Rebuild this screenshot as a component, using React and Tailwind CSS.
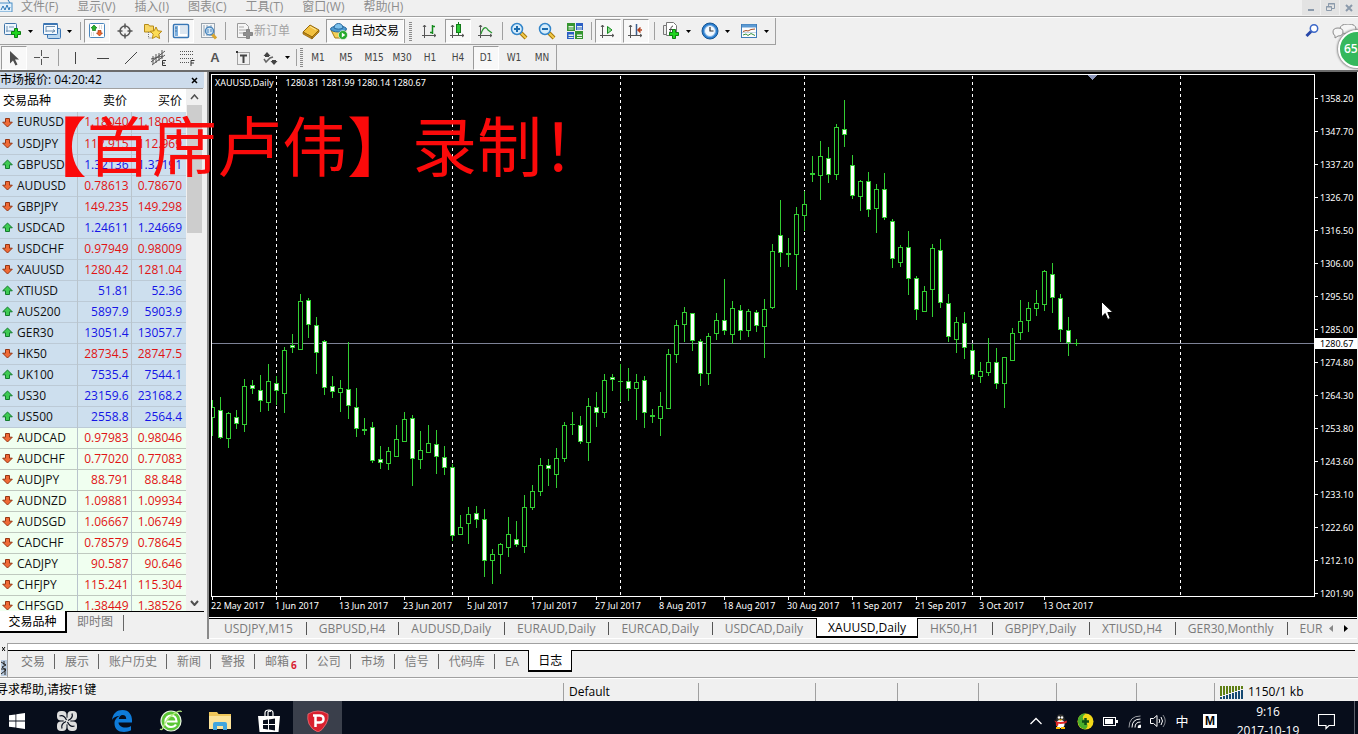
import React from 'react';

const MENUS = ['文件(F)', '显示(V)', '插入(I)', '图表(C)', '工具(T)', '窗口(W)', '帮助(H)'];

const QUOTES = [
  ['EURUSD', '1.18040', '1.18095', 'd'],
  ['USDJPY', '112.915', '112.969', 'd'],
  ['GBPUSD', '1.32136', '1.32191', 'u'],
  ['AUDUSD', '0.78613', '0.78670', 'd'],
  ['GBPJPY', '149.235', '149.298', 'd'],
  ['USDCAD', '1.24611', '1.24669', 'u'],
  ['USDCHF', '0.97949', '0.98009', 'd'],
  ['XAUUSD', '1280.42', '1281.04', 'd'],
  ['XTIUSD', '51.81', '52.36', 'u'],
  ['AUS200', '5897.9', '5903.9', 'u'],
  ['GER30', '13051.4', '13057.7', 'u'],
  ['HK50', '28734.5', '28747.5', 'd'],
  ['UK100', '7535.4', '7544.1', 'u'],
  ['US30', '23159.6', '23168.2', 'u'],
  ['US500', '2558.8', '2564.4', 'u'],
  ['AUDCAD', '0.97983', '0.98046', 'd'],
  ['AUDCHF', '0.77020', '0.77083', 'd'],
  ['AUDJPY', '88.791', '88.848', 'd'],
  ['AUDNZD', '1.09881', '1.09934', 'd'],
  ['AUDSGD', '1.06667', '1.06749', 'd'],
  ['CADCHF', '0.78579', '0.78645', 'd'],
  ['CADJPY', '90.587', '90.646', 'd'],
  ['CHFJPY', '115.241', '115.304', 'd'],
  ['CHFSGD', '1.38449', '1.38526', 'd'],
];

// One candle every 8 units from the left edge: [high, low, body top, body bottom, filled]
const CANDLES = [
  [400, 436, 407, 418, 0], [397, 439, 410, 438, 1], [412, 448, 413, 439, 0], [410, 429, 417, 424, 1],
  [379, 432, 386, 425, 0], [380, 394, 385, 389, 1], [375, 412, 390, 401, 1], [364, 411, 381, 403, 0],
  [376, 405, 383, 391, 1], [347, 413, 350, 394, 0], [334, 353, 345, 348, 1], [294, 350, 301, 350, 0],
  [298, 338, 300, 325, 1], [317, 374, 325, 353, 1], [340, 395, 341, 388, 1], [376, 398, 386, 392, 1],
  [380, 412, 388, 393, 0], [342, 419, 389, 406, 1], [388, 437, 407, 429, 1], [418, 435, 429, 431, 1],
  [422, 463, 427, 461, 1], [446, 469, 459, 463, 1], [447, 470, 451, 464, 0], [425, 457, 439, 457, 0],
  [412, 442, 419, 442, 0], [415, 486, 418, 459, 1], [431, 469, 450, 460, 0], [425, 453, 443, 453, 0],
  [430, 474, 444, 457, 1], [446, 475, 457, 468, 1], [464, 541, 467, 536, 1], [515, 535, 527, 535, 0],
  [507, 544, 514, 524, 0], [506, 528, 513, 520, 1], [509, 577, 519, 561, 1], [549, 584, 554, 561, 0],
  [543, 574, 544, 555, 0], [517, 557, 534, 548, 0], [521, 547, 539, 545, 1], [495, 553, 507, 547, 0],
  [485, 510, 491, 508, 0], [458, 496, 465, 492, 0], [459, 486, 465, 469, 1], [448, 488, 458, 475, 0],
  [422, 462, 425, 459, 0], [412, 435, 424, 425, 1], [416, 444, 425, 442, 1], [398, 461, 406, 443, 0],
  [392, 427, 407, 413, 1], [374, 418, 380, 413, 0], [374, 391, 377, 380, 1], [364, 402, 381, 382, 1],
  [368, 401, 381, 389, 1], [374, 420, 382, 389, 0], [376, 428, 380, 413, 1], [409, 423, 415, 417, 1],
  [392, 436, 406, 419, 0], [349, 409, 354, 409, 0], [320, 363, 325, 355, 0], [307, 342, 312, 325, 0],
  [313, 351, 313, 341, 1], [339, 386, 341, 374, 1], [333, 385, 336, 374, 0], [313, 340, 320, 334, 0],
  [279, 335, 320, 331, 1], [301, 344, 308, 335, 0], [305, 340, 310, 331, 1], [309, 337, 311, 331, 0],
  [310, 332, 312, 326, 1], [299, 358, 309, 327, 0], [244, 309, 251, 308, 0], [200, 267, 235, 253, 1],
  [238, 267, 253, 255, 1], [207, 290, 214, 255, 0], [191, 231, 204, 216, 0], [156, 182, 173, 175, 1],
  [141, 200, 156, 176, 0], [147, 183, 158, 175, 1], [124, 180, 127, 175, 0], [100, 147, 129, 135, 1],
  [155, 199, 165, 196, 1], [180, 211, 181, 197, 0], [172, 217, 181, 210, 1], [184, 233, 189, 209, 0],
  [173, 220, 189, 218, 1], [219, 268, 221, 259, 1], [245, 267, 247, 263, 0], [231, 295, 247, 279, 1],
  [276, 320, 278, 310, 1], [286, 312, 291, 312, 0], [244, 317, 248, 290, 0], [239, 308, 250, 303, 1],
  [294, 342, 303, 337, 1], [317, 353, 322, 340, 0], [312, 359, 323, 348, 1], [344, 379, 350, 375, 1],
  [362, 383, 371, 377, 0], [338, 376, 362, 373, 0], [348, 389, 362, 384, 1], [357, 408, 357, 384, 0],
  [328, 361, 333, 361, 0], [300, 340, 321, 333, 0], [302, 332, 308, 321, 0], [290, 316, 303, 309, 0],
  [270, 311, 271, 305, 0], [263, 313, 274, 298, 1], [294, 342, 298, 330, 1], [317, 356, 330, 343, 1],
  [339, 346, 343, 344, 1],
];

const PRICES = ['1358.20', '1347.70', '1337.20', '1326.70', '1316.50', '1306.00', '1295.50', '1285.00', '1274.80', '1264.30', '1253.80', '1243.60', '1233.10', '1222.60', '1212.10', '1201.90'];
const DATES = ['22 May 2017', '1 Jun 2017', '13 Jun 2017', '23 Jun 2017', '5 Jul 2017', '17 Jul 2017', '27 Jul 2017', '8 Aug 2017', '18 Aug 2017', '30 Aug 2017', '11 Sep 2017', '21 Sep 2017', '3 Oct 2017', '13 Oct 2017'];
const CHART_TABS = ['USDJPY,M15', 'GBPUSD,H4', 'AUDUSD,Daily', 'EURAUD,Daily', 'EURCAD,Daily', 'USDCAD,Daily', 'XAUUSD,Daily', 'HK50,H1', 'GBPJPY,Daily', 'XTIUSD,H4', 'GER30,Monthly', 'EUR'];
const TERMINAL_TABS = ['交易', '展示', '账户历史', '新闻', '警报', '邮箱', '公司', '市场', '信号', '代码库', 'EA', '日志'];
const FRAMES = ['M1', 'M5', 'M15', 'M30', 'H1', 'H4', 'D1', 'W1', 'MN'];

function Ico({ children, size = 18 }) {
  return (
    <svg width={size} height={size} viewBox={`0 0 ${size} ${size}`} fill="none" className="shrink-0" aria-hidden="true">
      {children}
    </svg>
  );
}

function Tool({ label, pressed, children }) {
  return (
    <button type="button" aria-label={label} aria-pressed={!!pressed} className="flex w-7 shrink-0 items-center justify-center">
      <span
        className={
          pressed
            ? 'flex h-6 w-[26px] items-center justify-center border border-t-[#9a9a9a] border-l-[#9a9a9a] border-r-white border-b-white bg-[#f8f8f8]'
            : 'flex h-6 w-[26px] items-center justify-center'
        }
      >
        {children}
      </span>
    </button>
  );
}

function Drop({ label, children }) {
  return (
    <button type="button" aria-label={label} className="flex w-[39px] shrink-0 items-center gap-[6px] pl-1">
      {children}
      <svg width="5" height="3" viewBox="0 0 5 3" aria-hidden="true"><path d="M0 0h5L2.500 3z" fill="#000" /></svg>
    </button>
  );
}

function Sep({ wide }) {
  return (
    <div className={wide ? 'flex w-2 shrink-0 justify-center' : 'flex w-[5px] shrink-0 justify-center'}>
      <div className="my-1 w-px bg-[#a0a0a0]" />
    </div>
  );
}

function Grip({ tight }) {
  return (
    <div className={tight ? 'mx-px flex w-[3px] shrink-0 flex-col justify-center gap-px' : 'mx-1 flex w-[3px] shrink-0 flex-col justify-center gap-px'}>
      {Array.from({ length: 10 }, (_, i) => <div key={i} className="h-px bg-[#8c8c8c]" />)}
    </div>
  );
}

const Axes = () => <path d="M3.500 3v13M1 13.500h14M2 5l1.500-2L5 5M13 12l2 1.500-2 1.500" stroke="#555" />;
const Plus = ({ x, y, c = '#1fd51f', s = '#0c7f12' }) => (
  <path transform={`translate(${x} ${y})`} d="M3.500 .5h3v3h3v3h-3v3h-3v-3h-3v-3h3z" fill={c} stroke={s} />
);

function Magnifier({ plus }) {
  return (
    <Ico>
      <path d="M11 11l5 5" stroke="#a77708" strokeWidth="4" />
      <path d="M11 11l5 5" stroke="#f3cb4c" strokeWidth="2" />
      <circle cx="7" cy="7" r="5.500" fill="#d7edfb" stroke="#3385c9" strokeWidth="1.500" />
      <path d={plus ? 'M4 7h6M7 4v6' : 'M4 7h6'} stroke="#1c6cae" strokeWidth="2" />
    </Ico>
  );
}

function MainToolbar() {
  return (
    <div className="flex h-[27px] shrink-0 items-stretch self-start border-b border-[#a0a0a0] border-r">
      <Drop label="新图表">
        <Ico>
          <rect x=".5" y="1.500" width="12" height="11" rx="1" fill="#eef6fd" stroke="#3f74a8" />
          <path d="M3 10V4M2 9h8M5 5h5" stroke="#6d92b5" />
          <Plus x="7" y="6" />
        </Ico>
      </Drop>
      <Drop label="配置文件">
        <Ico>
          <rect x="4.500" y="6.500" width="13" height="10" rx="1" fill="#bcd8ef" stroke="#3b75b3" />
          <rect x=".5" y="1.500" width="14" height="11" rx="1" fill="#f4f9fe" stroke="#3b75b3" />
          <path d="M.5 2h14" stroke="#3b75b3" strokeWidth="2" />
          <path d="M3 10V4.500h9M3 9h9l-2-1.500M9 10.500L12 9" stroke="#6d8fb0" />
        </Ico>
      </Drop>
      <Sep />
      <Tool label="市场报价" pressed>
        <Ico>
          <rect x="1.500" y="1.500" width="15" height="14" rx="1" fill="#fff" stroke="#4a86bd" />
          <path d="M6 3l3 3H7.500v2.500h-3V6H3z" fill="#26b22c" stroke="#147a1a" strokeWidth=".7" />
          <path d="M11.500 14l-3-3H10V8.500h3V11h1.500z" fill="#f1672c" stroke="#a83a10" strokeWidth=".7" />
          <path d="M11 4h4M11 6h3M3 11h4M3 13h4" stroke="#bbb" strokeDasharray="1 1" />
        </Ico>
      </Tool>
      <Tool label="数据窗口">
        <Ico>
          <circle cx="9" cy="9" r="5" stroke="#555" strokeWidth="1.500" />
          <path d="M9 1.500v5M9 11.500v5M1.500 9h5M11.500 9h5" stroke="#555" strokeWidth="1.500" />
        </Ico>
      </Tool>
      <Tool label="导航">
        <Ico>
          <path d="M.5 2.500h4l1 1.500h4v6h-9z" fill="#f8d764" stroke="#b58a17" />
          <path d="M4.500 10v6h4" stroke="#777" strokeDasharray="1 1" />
          <path d="M12 5l1.800 3.800 4 .5-3 2.900.8 4.300L12 14.500 8.400 16.500l.8-4.300-3-2.900 4-.5z" fill="#fcdc55" stroke="#b98a13" />
        </Ico>
      </Tool>
      <Tool label="终端" pressed>
        <Ico>
          <rect x="1.500" y="2.500" width="15" height="13" rx="1" fill="#fff" stroke="#3776b5" strokeWidth="1.500" />
          <path d="M3 4h3v10H3z" fill="#7db0df" />
          <path d="M8 5h7M8 7h7M8 9h7M8 11h7" stroke="#b9cde1" />
          <path d="M3.500 6h1M3.500 9h1" stroke="#0d4078" />
        </Ico>
      </Tool>
      <Tool label="策略测试">
        <Ico>
          <rect x="1.500" y="1.500" width="13" height="14" fill="#f4f6f8" stroke="#9aa4ae" />
          <path d="M4 3v11M7 3v11M11 3v11" stroke="#8fa0b0" />
          <path d="M12 12l4 4.500" stroke="#d9a62e" strokeWidth="3" />
          <circle cx="9.500" cy="9" r="4" fill="#cfe6f8" fillOpacity=".85" stroke="#4a86bd" strokeWidth="1.500" />
          <path d="M8 7v4M11 7v3" stroke="#4a86bd" />
        </Ico>
      </Tool>
      <Sep />
      <button type="button" className="ml-2 flex shrink-0 items-center text-[#a3a3a3]">
        <Ico>
          <path d="M1.500 1.500h8l3 3v11h-11z" fill="#f6f6f6" stroke="#9a9a9a" />
          <path d="M3 5h5M3 8h7M3 11h4" stroke="#aaa" />
          <Plus x="7" y="7" c="#8f8f8f" s="#858585" />
        </Ico>
        <span className="text-xs">新订单</span>
      </button>
      <div className="w-[7px] shrink-0" />
      <Tool label="编辑器">
        <Ico>
          <path d="M1 10L8 3l9 5-7 7z" fill="#f2c140" stroke="#95690c" />
          <path d="M1 10v2l9 5v-2zM10 15v2l7-7V8z" fill="#c48b16" stroke="#8b600b" strokeWidth=".7" />
          <path d="M8 4.500L14 8" stroke="#fde79b" />
        </Ico>
      </Tool>
      <button type="button" className="my-px ml-px flex shrink-0 items-center gap-[3px] border border-t-[#9a9a9a] border-l-[#9a9a9a] border-r-white border-b-white bg-[#f8f8f8] pr-1 pl-[3px] text-black">
        <Ico>
          <path d="M1 8l4 8h7l4-8z" fill="#f4cf57" stroke="#a67c15" />
          <ellipse cx="8.500" cy="7" rx="8" ry="3" fill="#4c9bd2" stroke="#26679c" />
          <path d="M4 6c0-6 9-6 9 0-2 1.500-7 1.500-9 0z" fill="#7cc1ec" stroke="#26679c" />
          <circle cx="13" cy="13" r="4.500" fill="#24a92b" stroke="#fff" strokeWidth=".6" />
          <path d="M11.800 10.500v5l3.500-2.500z" fill="#fff" />
        </Ico>
        <span className="text-xs">自动交易</span>
      </button>
      <div className="my-px w-px bg-[#a0a0a0]" />
      <Grip />
      <Tool label="柱状图">
        <Ico><Axes /><path d="M11.500 3v9M11 4.500h3M9 10.500h2" stroke="#138a1c" strokeWidth="1.500" /></Ico>
      </Tool>
      <Tool label="蜡烛图" pressed>
        <Ico><Axes /><path d="M9.500 0v13" stroke="#137a1a" /><rect x="7.500" y="2.500" width="4" height="8" fill="#2bc934" stroke="#137a1a" /></Ico>
      </Tool>
      <Tool label="折线图">
        <Ico><Axes /><path d="M4 12c2-7 5-8 7-4l4 3" stroke="#2c9733" strokeWidth="1.200" /></Ico>
      </Tool>
      <Sep />
      <Tool label="放大"><Magnifier plus /></Tool>
      <Tool label="缩小"><Magnifier /></Tool>
      <Tool label="平铺窗口">
        <Ico>
          <path d="M1 1h8v8H1zM9 9h8v8H9z" fill="#35952f" />
          <path d="M10 1h7v7h-7zM1 10h7v7H1z" fill="#2c5fc4" />
          <path d="M2.500 4h5v1.500h-5zM2.500 6.500h5v1h-5zM11 4h5v1.500h-5zM11 6.500h5v1h-5zM2.500 12.500h5V14h-5zM2.500 15h5v1h-5zM11 12.500h5V14h-5zM11 15h5v1h-5z" fill="#e4f1e6" />
        </Ico>
      </Tool>
      <Sep />
      <Tool label="自动滚动" pressed><Ico><Axes /><path d="M8.500 4.500v7l4.500-3.500z" fill="#8edb8f" stroke="#148a1d" /></Ico></Tool>
      <Tool label="图表平移" pressed>
        <Ico><Axes /><path d="M9.500 2v11" stroke="#3b5f8f" strokeWidth="1.500" /><path d="M15 8h-3M13.500 5.500L11 8l2.500 2.500" stroke="#b5401c" strokeWidth="1.500" /></Ico>
      </Tool>
      <Sep wide />
      <Drop label="技术指标">
        <Ico>
          <path d="M4.500 .5h7l3 3v10h-10z" fill="#fff" stroke="#777" />
          <path d="M1.500 3.500h3v9h-3z" fill="#eee" stroke="#777" />
          <path d="M7 11c2 0 1-7 4-7M7 7.500h4" stroke="#444" />
          <Plus x="7" y="7" />
        </Ico>
      </Drop>
      <Drop label="周期">
        <Ico>
          <circle cx="9" cy="9" r="8" fill="#2c7fd0" stroke="#155492" />
          <circle cx="9" cy="9" r="5.500" fill="#f3f9ff" stroke="#83b5e4" />
          <path d="M9 5v4h3.500" stroke="#333" strokeWidth="1.200" />
        </Ico>
      </Drop>
      <Drop label="模板">
        <Ico>
          <rect x="1.500" y="2.500" width="15" height="13" fill="#fdfdfd" stroke="#3f7cb8" />
          <path d="M2 4h14" stroke="#5c9ad3" strokeWidth="3" />
          <path d="M3 9.500l3-1 2 .5 3-1.500 4-.5" stroke="#a94e22" />
          <path d="M3 13l3-1 2 1.500 3-2 4 2" stroke="#379340" />
          <path d="M2 10.500h14" stroke="#9dbcd9" strokeWidth=".6" />
        </Ico>
      </Drop>
    </div>
  );
}

function LineToolbar() {
  return (
    <div className="flex h-[25px] shrink-0 items-stretch self-start border-r border-[#a0a0a0] text-[#444]">
      <Tool label="光标" pressed>
        <Ico><path d="M5 2v12.500l3-3 2.500 5 2-1-2.500-5h4z" fill="#4d4d4d" /></Ico>
      </Tool>
      <Tool label="十字准线"><Ico><path d="M8.500 1v6M8.500 10v6M1 8.500h6M10 8.500h6" stroke="#555" /></Ico></Tool>
      <Sep />
      <Tool label="垂直线"><Ico><path d="M9.500 3v12" stroke="#444" /></Ico></Tool>
      <Tool label="水平线"><Ico><path d="M3 9.500h12" stroke="#444" /></Ico></Tool>
      <Tool label="趋势线"><Ico><path d="M3 15L15 3" stroke="#444" /></Ico></Tool>
      <Tool label="通道">
        <Ico>
          <path d="M1 13L15 2M2 16L15 6M3 7v8M6 5v9M9 4v8M12 1v9M1 10l12-3" stroke="#555" />
          <path d="M16 11.500h-3.500v5H16M12.500 14H15" stroke="#333" />
        </Ico>
      </Tool>
      <Tool label="斐波那契">
        <Ico>
          <path d="M2 2.500h13M2 5.500h13M2 9.500h13M2 13.500h9" stroke="#555" strokeDasharray="1 1" />
          <path d="M16.500 11.500H13v5.500M13 14h3" stroke="#333" />
        </Ico>
      </Tool>
      <Tool label="文字"><span className="font-['Liberation_Sans'] text-[13px] font-bold text-[#555]">A</span></Tool>
      <Tool label="文字标签">
        <Ico>
          <rect x="3.500" y="3.500" width="12" height="12" stroke="#555" strokeDasharray="1 1" />
          <path d="M2 2h2v2H2z" fill="#333" />
          <path d="M6 6.500h7M9.500 6v8" stroke="#444" strokeWidth="2" />
        </Ico>
      </Tool>
      <Drop label="箭头">
        <Ico>
          <path d="M6 3l3.500 4H8v1H4V7H2.500zM13 16l-3.500-4H11v-1h4v1h1.500z" fill="#444" />
          <path d="M3 10l2 3 4-4 3-1" stroke="#666" strokeWidth="1.500" />
        </Ico>
      </Drop>
      <div className="my-1 mr-[2px] w-px bg-[#a0a0a0]" />
      <Grip tight />
      {FRAMES.map((f) => (
        <Tool key={f} label={f} pressed={f === 'D1'}>
          <span className="font-['DejaVu_Sans_Condensed','Noto_Sans',sans-serif] text-[10px]">{f}</span>
        </Tool>
      ))}
    </div>
  );
}

function QuoteArrow({ up }) {
  return (
    <svg width="11" height="11" viewBox="0 0 11 11" className="mx-auto block" aria-hidden="true">
      {up
        ? <path d="M5.500 1L10.300 5.800H7.500V9.500h-4V5.800H.7z" fill="#3ecb52" stroke="#137a2c" />
        : <path d="M5.500 10L.7 5.200h2.800V1.500h4v3.700h2.800z" fill="#f06a36" stroke="#963512" />}
    </svg>
  );
}

function MarketWatch() {
  return (
    <aside className="flex w-[207px] shrink-0 flex-col pr-[3px]">
      <div className="flex h-4 shrink-0 items-center justify-between bg-[#cddcec] pr-1 text-xs leading-4 text-black">
        <h2>市场报价: 04:20:42</h2>
        <button type="button" aria-label="关闭市场报价" className="flex h-3 w-3 items-center justify-center">
          <svg width="7" height="7" viewBox="0 0 7 7" aria-hidden="true"><path d="M1 1l5 5M6 1L1 6" stroke="#000" strokeWidth="1.500" /></svg>
        </button>
      </div>
      <div className="mr-px flex min-h-0 flex-1 overflow-hidden border-t border-[#a0a0a0] bg-white">
        <div className="min-h-0 flex-1 overflow-hidden">
          <table className="w-full table-fixed border-collapse text-xs">
            <colgroup><col className="w-[14px]" /><col className="w-[63px]" /><col className="w-[54px]" /><col className="w-[55px]" /></colgroup>
            <thead>
              <tr className="h-[23px] text-black">
                <th scope="col" colSpan={2} className="pl-[3px] text-left font-normal">交易品种</th>
                <th scope="col" className="pr-1 text-right font-normal">卖价</th>
                <th scope="col" className="pr-1 text-right font-normal">买价</th>
              </tr>
            </thead>
            <tbody>
              {QUOTES.map(([name, bid, ask, dir], i) => (
                <tr key={name} className={i < 15 ? 'h-[21px] border-b border-[#bccad6] bg-[#cddfee]' : 'h-[21px] border-b border-[#bfc9bf] bg-[#f0fff0]'}>
                  <td className="p-0"><QuoteArrow up={dir === 'u'} /></td>
                  <td className="border-r border-[#b9c4cc] p-0 pl-[3px] leading-5 text-[#111]">{name}</td>
                  <td className={dir === 'u' ? 'border-r border-[#b9c4cc] p-0 pr-[2px] text-right leading-5 text-[#1414e6]' : 'border-r border-[#b9c4cc] p-0 pr-[2px] text-right leading-5 text-[#e01414]'}>{bid}</td>
                  <td className={dir === 'u' ? 'p-0 pr-1 text-right leading-5 text-[#1414e6]' : 'p-0 pr-1 text-right leading-5 text-[#e01414]'}>{ask}</td>
                </tr>
              ))}
            </tbody>
          </table>
        </div>
        <div className="flex w-[17px] shrink-0 flex-col items-center justify-between bg-[#f0f0f0]">
          <div className="flex w-full flex-col items-center">
            <button type="button" aria-label="向上滚动" className="flex h-4 w-full items-center justify-center">
              <svg width="9" height="6" viewBox="0 0 9 6" fill="none" aria-hidden="true"><path d="M1 5l3.500-4L8 5" stroke="#505050" strokeWidth="1.500" /></svg>
            </button>
            <div className="h-32 w-[15px] bg-[#cdcdcd]" />
          </div>
          <button type="button" aria-label="向下滚动" className="flex h-4 w-full items-center justify-center">
            <svg width="9" height="6" viewBox="0 0 9 6" fill="none" aria-hidden="true"><path d="M1 1l3.500 4L8 1" stroke="#505050" strokeWidth="2" /></svg>
          </button>
        </div>
      </div>
      <div className="flex h-7 shrink-0 items-start text-xs leading-[19px]">
        <button type="button" className="h-[22px] w-[67px] border-r-2 border-b-2 border-black bg-white text-black">交易品种</button>
        <div className="flex flex-1 border-t border-black pr-1">
          <button type="button" className="h-[19px] px-[10px] text-[#7a7a7a]">即时图</button>
          <div className="mt-[3px] h-4 w-px bg-[#666]" />
        </div>
      </div>
    </aside>
  );
}

function CandleChart() {
  return (
    <section className="relative flex min-h-0 flex-1 flex-col bg-black pt-[2px] pl-[2px] font-['Noto_Sans','Open_Sans',sans-serif] text-[9px] text-white">
      <div className="flex min-h-0 flex-1">
        <div className="relative min-w-0 flex-1 overflow-hidden border border-white">
          <svg width="100%" height="521" className="block" shapeRendering="crispEdges" role="img" aria-label="XAUUSD 日线图">
            <g transform="translate(-212 -75)">
              <g stroke="#fff" strokeDasharray="3 3">
                {[276, 452, 620, 804, 972, 1180].map((x) => <line key={x} x1={x + 0.5} x2={x + 0.5} y1="76" y2="596" />)}
              </g>
              <line x1="212" x2="4000" y1="343.5" y2="343.5" stroke="#7d8296" />
              {CANDLES.map(([hi, lo, t, b, fill], i) => {
                const x = 212 + i * 8;
                const flat = b - t <= 2;
                return (
                  <g key={x}>
                    <rect x={x} y={hi} width="1" height={lo - hi} fill="#32cd32" />
                    {flat
                      ? <rect x={x - 2} y={t} width="5" height={b - t} fill="#32cd32" />
                      : <rect x={x - 1.5} y={t + 0.5} width="4" height={b - t - 1} fill={fill ? '#fff' : '#000'} stroke="#32cd32" />}
                  </g>
                );
              })}
              <path d="M1088 75h9l-4.500 5z" fill="#8a94b8" />
            </g>
          </svg>
          <p className="absolute top-[2px] left-[3px] flex gap-3 leading-3"><span>XAUUSD,Daily</span><span>1280.81 1281.99 1280.14 1280.67</span></p>
        </div>
        <div className="relative w-[42px] shrink-0 pt-2">
          {PRICES.map((p) => (
            <div key={p} className="flex h-[33px] items-center gap-[2px]"><div className="h-px w-[3px] bg-white" />{p}</div>
          ))}
          <div className="absolute top-[264px] left-0 flex h-[11px] w-full items-center bg-white pl-[5px] text-black">1280.67</div>
        </div>
      </div>
      <div className="flex h-[20px] shrink-0 overflow-hidden">
        {DATES.map((d) => (
          <div key={d} className="w-16 shrink-0 whitespace-nowrap"><div className="ml-px h-[3px] w-px bg-white" /><div className="leading-3">{d}</div></div>
        ))}
      </div>
      <svg width="12" height="20" viewBox="0 0 12 20" className="absolute top-[229px] left-[892px]" aria-hidden="true">
        <path d="M.5 .5v15.500l3.700-3.500 2.500 6 2.600-1.100-2.500-5.900H12z" fill="#fff" stroke="#000" />
      </svg>
    </section>
  );
}

function ChartTabs() {
  return (
    <nav className="flex h-[21px] shrink-0 items-start border-b border-white bg-[#f0f0f0] text-xs leading-[19px] text-[#7a7a7a]">
      <div className="flex min-w-0 flex-1 overflow-hidden">
        <div className="w-[3px] shrink-0 border-t border-black" />
        {CHART_TABS.map((t) =>
          t === 'XAUUSD,Daily' ? (
            <button key={t} type="button" className="h-[20px] shrink-0 border-x border-b-2 border-black bg-white px-[11px] text-black">{t}</button>
          ) : (
            <button key={t} type="button" className="flex h-[20px] shrink-0 items-center border-t border-black"><span className="pr-[13px] pl-3">{t}</span>{t !== 'USDCAD,Daily' && t !== 'EUR' && <span className="h-[13px] w-px bg-[#555]" />}</button>
          ),
        )}
        <div className="flex-1 border-t border-black" />
      </div>
      <div className="flex w-7 shrink-0 items-center justify-between border-t border-black pr-[9px]">
        <button type="button" aria-label="上一个标签" className="h-[19px]"><svg width="4" height="7" viewBox="0 0 4 7"><path d="M4 0v7L0 3.500z" fill="#888" /></svg></button>
        <button type="button" aria-label="下一个标签" className="h-[19px]"><svg width="4" height="7" viewBox="0 0 4 7"><path d="M0 0v7l4-3.500z" fill="#000" /></svg></button>
      </div>
    </nav>
  );
}

function Terminal() {
  return (
    <section className="flex h-[35px] shrink-0 border-b border-[#a0a0a0] bg-[#f0f0f0] text-xs">
      <div className="flex w-[7px] shrink-0 flex-col items-center gap-2 pt-[3px]">
        <svg width="4" height="6" viewBox="0 0 4 6"><path d="M0 1l3 4M3 1L0 5" stroke="#000" /></svg>
        <svg width="6" height="16" viewBox="0 0 6 16"><rect width="6" height="16" fill="#b9cbe0" /><path d="M0 2l5 3-4 2 4 3-5 4M3 1v4M4 9v6M0 9h5" stroke="#222" fill="none" /></svg>
      </div>
      <div className="flex flex-1 flex-col border-t border-l border-[#a0a0a0]">
        <div className="h-[6px] shrink-0 bg-white" />
        <div className="flex items-start text-[#7a7a7a]">
          {TERMINAL_TABS.map((t) =>
            t === '日志' ? (
              <button key={t} type="button" className="h-[22px] shrink-0 border-x border-b-2 border-black bg-white px-[9px] leading-[19px] text-black">{t}</button>
            ) : (
              <button key={t} type="button" className="flex h-[22px] shrink-0 items-center border-t border-black leading-[19px] first:pl-[3px]">
                <span className="pr-[9px] pl-[10px]">
                  {t}
                  {t === '邮箱' && <sub className="ml-[2px] text-[10px] font-bold text-[#d8202f]">6</sub>}
                </span>
                {t !== 'EA' && <span className="h-[15px] w-px bg-[#666]" />}
              </button>
            ),
          )}
          <div className="mr-[3px] h-px flex-1 bg-black" />
        </div>
      </div>
    </section>
  );
}

function StatusBar() {
  return (
    <footer className="flex h-[23px] shrink-0 items-end border-t border-white bg-[#f0f0f0] text-xs text-black">
      <div className="flex h-full flex-1 items-center overflow-hidden"><span className="-ml-1">寻求帮助,请按F1键</span></div>
      <div className="flex h-[18px] w-[135px] items-center border-l border-[#a0a0a0] pl-[5px]">Default</div>
      <div className="h-[18px] w-[117px] border-l border-[#a0a0a0]" />
      <div className="h-[18px] w-[82px] border-l border-[#a0a0a0]" />
      <div className="h-[18px] w-[81px] border-l border-[#a0a0a0]" />
      <div className="h-[18px] w-[78px] border-l border-[#a0a0a0]" />
      <div className="h-[18px] w-20 border-l border-[#a0a0a0]" />
      <div className="h-[18px] w-[78px] border-l border-[#a0a0a0]" />
      <div className="flex h-[18px] w-36 items-center gap-1 border-l border-[#a0a0a0] pl-[5px]">
        <svg width="24" height="13" viewBox="0 0 24 13" shapeRendering="crispEdges" aria-hidden="true">
          {[0, 1, 2, 3, 4, 5, 6, 7].map((i) => (
            <g key={i}>
              <rect x={i * 3} y="0" width="2" height={10 - i} fill="#5f7f14" />
              <rect x={i * 3} y={11 - i} width="2" height={2 + i} fill="#154a73" />
            </g>
          ))}
        </svg>
        1150/1 kb
      </div>
    </footer>
  );
}

function Task({ label, active, children }) {
  return (
    <button type="button" aria-label={label} className={active ? 'flex h-10 w-[49px] items-center justify-center bg-[#3a3f4b]' : 'flex h-10 w-[49px] items-center justify-center'}>
      {children}
    </button>
  );
}

function Taskbar() {
  return (
    <div className="flex h-[33px] shrink-0 items-start overflow-hidden bg-[#070d1b] text-white">
      <button type="button" aria-label="开始" className="flex h-10 w-[42px] items-center pl-[9px]">
        <svg width="16" height="16" viewBox="0 0 16 16"><path d="M0 2.300L6.500 1.400v6.200H0zM7.300 1.300L16 0v7.600H7.300zM0 8.400h6.500v6.200L0 13.700zM7.300 8.400H16V16l-8.700-1.300z" fill="#fff" /></svg>
      </button>
      <Task label="四叶草">
        <svg width="22" height="22" viewBox="0 0 22 22" fill="#dedede">
          <rect x="1" y="1" width="9.500" height="9.500" rx="4" /><rect x="11.500" y="1" width="9.500" height="9.500" rx="4" />
          <rect x="1" y="11.500" width="9.500" height="9.500" rx="4" /><rect x="11.500" y="11.500" width="9.500" height="9.500" rx="4" />
          <circle cx="11" cy="11" r="3.500" />
          <path d="M3.500 6Q8 4.500 10.500 10M16 3.500Q17.500 8 12 10.500M18.500 16Q14 17.500 11.500 12M6 18.500Q4.500 14 10 11.500" fill="none" stroke="#070d1b" strokeWidth="1.200" />
        </svg>
      </Task>
      <div className="w-[6px] shrink-0" />
      <Task label="Edge">
        <svg width="22" height="22" viewBox="0 0 22 22">
          <path d="M1 10C2 3 6 0 11.500 0 18 0 21 5 21 10v2.500H7.500c.3 3.500 3.500 5 6.500 5 2.500 0 4.500-.6 6-1.600v4.400c-2 1.200-4.500 1.700-7 1.700C7 22 3.500 18.500 3.500 13.500 3.500 9.500 6 7 9 5.700 4.500 6 2 8 1 10zM7.800 9h7.400c0-2.500-1.200-4-3.500-4S8.200 6.700 7.800 9z" fill="#0e7bd9" />
        </svg>
      </Task>
      <Task label="360浏览器">
        <svg width="24" height="24" viewBox="0 0 24 24">
          <circle cx="12" cy="12" r="10" fill="#5cc636" stroke="#e9f7e2" strokeWidth="1.200" />
          <path d="M6.500 12.500h11c0-4.500-3-6-5.500-6s-5.500 2-5.500 6S9 18 12 18c2 0 4-.8 5-2.500" fill="none" stroke="#fff" strokeWidth="2.200" />
          <path d="M1 20C5 23 3 14 12 7 18 2 22 1 22.500 3" fill="none" stroke="#b7ee82" strokeWidth="1.300" />
        </svg>
      </Task>
      <Task label="文件资源管理器">
        <svg width="22" height="20" viewBox="0 0 22 20">
          <path d="M0 1h8l1.500 2H22v15H0z" fill="#efc65a" /><path d="M0 5h22v13H0z" fill="#fce39a" />
          <path d="M4 19v-6q0-2 2-2h10q2 0 2 2v6h-4v-4H8v4z" fill="#41a5dd" />
        </svg>
      </Task>
      <Task label="应用商店">
        <svg width="22" height="24" viewBox="0 0 22 24">
          <path d="M7 8V4q0-3 4-3t4 3v4M10 7V3q1-1.500 3-.5" fill="none" stroke="#fff" strokeWidth="1.200" />
          <path d="M0 7h22l-1.500 16h-19z" fill="#fff" />
          <path d="M5 11.200l5-.7V15H5zM11 10.400l6-.9V15h-6zM5 16h5v4.500l-5-.7zM11 16h6v5.500l-6-.9z" fill="#070d1b" />
        </svg>
      </Task>
      <Task label="P 应用" active>
        <svg width="22" height="22" viewBox="0 0 22 22">
          <path d="M1 4Q11-2 21 4q1 5-2 10-4 7-8 8-6-2-9-8-2-5-1-10z" fill="#d9202e" stroke="#f37a7f" strokeWidth=".7" />
          <path d="M8.500 17V5.500h4q4 0 4 3.500t-4 3.500h-4M6 5.500h3" fill="none" stroke="#fff" strokeWidth="2.500" />
        </svg>
      </Task>
      <div className="flex-1" />
      <div className="flex h-10 items-center">
        <button type="button" aria-label="显示隐藏的图标" className="flex w-6 justify-center"><svg width="12" height="8" viewBox="0 0 12 8" fill="none"><path d="M.5 7L6 1.500 11.500 7" stroke="#fff" strokeWidth="1.300" /></svg></button>
        <button type="button" aria-label="QQ" className="flex w-6 justify-center">
          <svg width="13" height="15" viewBox="0 0 13 15"><ellipse cx="6.500" cy="8" rx="5.500" ry="6" fill="#222" /><ellipse cx="6.500" cy="4" rx="3.800" ry="3.800" fill="#333" /><circle cx="5" cy="3.500" r="1.200" fill="#fff" /><circle cx="8" cy="3.500" r="1.200" fill="#fff" /><ellipse cx="6.500" cy="10" rx="4" ry="4" fill="#fff" /><path d="M4.500 5.500h4L6.500 7z" fill="#fb0" /><path d="M0 6.500q6.500 3 13 0l-.5 2.500Q6 10.500 4.500 9.500L4 12 2 11.500v-3z" fill="#e32424" /><path d="M2 14h4M7 14h4" stroke="#fb0" strokeWidth="2" /></svg>
        </button>
        <button type="button" aria-label="360安全卫士" className="flex w-[26px] justify-center">
          <svg width="17" height="17" viewBox="0 0 17 17"><circle cx="8.500" cy="8.500" r="8" fill="#f2d818" /><path d="M1 6Q3 0 9 .5 3 4 8 8.500T8 16.500Q0 15 1 6z" fill="#4aae2b" /><path d="M8.500 5v7M5 8.500h7" stroke="#0e4d16" strokeWidth="2.500" /></svg>
        </button>
        <button type="button" aria-label="电池" className="flex w-6 justify-center"><svg width="15" height="9" viewBox="0 0 15 9"><rect x=".5" y=".5" width="12" height="8" fill="none" stroke="#fff" /><path d="M2 2h8v5H2zM13 3h2v3h-2z" fill="#fff" /></svg></button>
        <button type="button" aria-label="网络" className="flex w-6 justify-center"><svg width="13" height="13" viewBox="0 0 13 13" fill="none" stroke="#fff"><path d="M1 12.500Q1 1 12.500 1" opacity=".6" /><path d="M4 12.500Q4 4 12.500 4M7 12.500Q7 7 12.500 7" /><path d="M10 12.500Q10 10 12.500 10v2.500z" fill="#fff" /></svg></button>
        <button type="button" aria-label="音量" className="flex w-6 justify-center"><svg width="17" height="14" viewBox="0 0 17 14" fill="none" stroke="#fff"><path d="M.5 4.500h3l3.500-3v11l-3.500-3h-3zM9 5q1.500 2 0 4M11 3q3 4 0 8" /><path d="M13 1q4.500 6 0 12" opacity=".5" /></svg></button>
        <button type="button" className="w-6 text-center text-[13px] leading-5">中</button>
        <button type="button" className="mx-[9px] h-[14px] w-[14px] bg-white text-center font-['Liberation_Sans'] text-xs leading-[14px] font-bold text-black">M</button>
        <div className="w-[84px] text-center text-xs leading-[19px] whitespace-nowrap"><div>9:16</div><div>2017-10-19</div></div>
        <button type="button" aria-label="通知" className="mr-[12px] flex w-8 justify-center"><svg width="17" height="17" viewBox="0 0 17 17" fill="none"><path d="M.5 1.500h16v11h-5.500L8 15.500v-3H.5z" stroke="#fff" strokeWidth="1.200" /></svg></button>
        <div className="mr-[3px] h-10 w-px bg-[#5a5f6a]" />
      </div>
    </div>
  );
}

export default function App() {
  return (
    <div className="relative flex h-screen flex-col overflow-hidden bg-[#f0f0f0] font-['Open_Sans','Noto_Sans_CJK_SC',sans-serif] text-xs">
      <header className="flex h-[17px] shrink-0 items-start justify-between border-b border-[#a0a0a0]">
        <nav className="flex gap-[19px] leading-[13px] text-[#8d8d8d]">
          <svg width="13" height="12" viewBox="0 0 13 12" className="-mr-[11px]" fill="none" aria-hidden="true"><rect x="-1" y="3" width="13" height="9" stroke="#4a8fc7" fill="#e4f1fb" /><path d="M1 10l2-4 2 4 2-5 2 5 1-3M8 0l2 3" stroke="#2c76b5" /></svg>
          {MENUS.map((m) => <button key={m} type="button">{m}</button>)}
        </nav>
        <div className="flex gap-px">
          <button type="button" aria-label="最小化" className="flex h-[15px] w-[18px] items-center justify-center bg-[#e3e3e3]"><svg width="7" height="7"><path d="M0 5h6v2H0z" fill="#8b9aab" /></svg></button>
          <button type="button" aria-label="还原" className="flex h-[15px] w-[18px] items-center justify-center bg-[#e3e3e3]"><svg width="9" height="9" fill="none"><path d="M2.500 3V.5h6v5H6M.5 3.500h5v4h-5z" stroke="#8b9aab" /><path d="M2 1h7M0 4h6" stroke="#8b9aab" /></svg></button>
          <button type="button" aria-label="关闭" className="flex h-[15px] w-[18px] items-center justify-center bg-[#e3e3e3]"><svg width="8" height="8"><path d="M1 1l6 6M7 1L1 7" stroke="#8b9aab" strokeWidth="2" /></svg></button>
        </div>
      </header>

      <div className="flex shrink-0 justify-between border-t border-b-2 border-t-white border-b-[#6b6b6b]">
        <div className="flex flex-col"><MainToolbar /><LineToolbar /></div>
        <div className="flex items-start gap-[13px] pt-[6px]">
          <button type="button" aria-label="搜索"><svg width="14" height="14" viewBox="0 0 14 14" fill="none"><circle cx="9" cy="4.500" r="3.700" fill="#fff" stroke="#3c68c8" strokeWidth="1.500" /><path d="M6 7.500L1.500 12" stroke="#2747a8" strokeWidth="3" /></svg></button>
          <button type="button" aria-label="聊天"><svg width="26" height="15" viewBox="0 0 26 15" fill="#f6f6f6" stroke="#8a8a8a"><path d="M8 5q0-5 8-5t8 5-7 5l-3 3v-3Q8 9 8 5z" /><path d="M1 8q0-4 5-4t5 4-5 4l-3 2v-2.500Q1 11 1 8z" /></svg></button>
        </div>
      </div>

      <main className="flex min-h-0 flex-1 pb-[4px]">
        <MarketWatch />
        <div className="flex min-w-0 flex-1 flex-col border-l-2 border-[#8a8a8a] pr-px">
          <CandleChart />
          <div className="h-px shrink-0 bg-white" />
          <ChartTabs />
        </div>
      </main>

      <Terminal />
      <StatusBar />
      <Taskbar />

      <div className="pointer-events-none absolute top-[95px] left-[22px] font-['Noto_Sans_CJK_SC',sans-serif] text-[65px] leading-[96px] whitespace-nowrap text-[#fb0a0a]">【首席卢伟】录制！</div>
      <div className="absolute top-[30px] -right-[18px] flex h-[38px] w-[38px] items-center rounded-full border-2 border-white bg-[#35b85c] pl-[4px] text-xs font-semibold text-white shadow-[0_0_2px_1px_#8a8a8a]">65</div>
    </div>
  );
}
